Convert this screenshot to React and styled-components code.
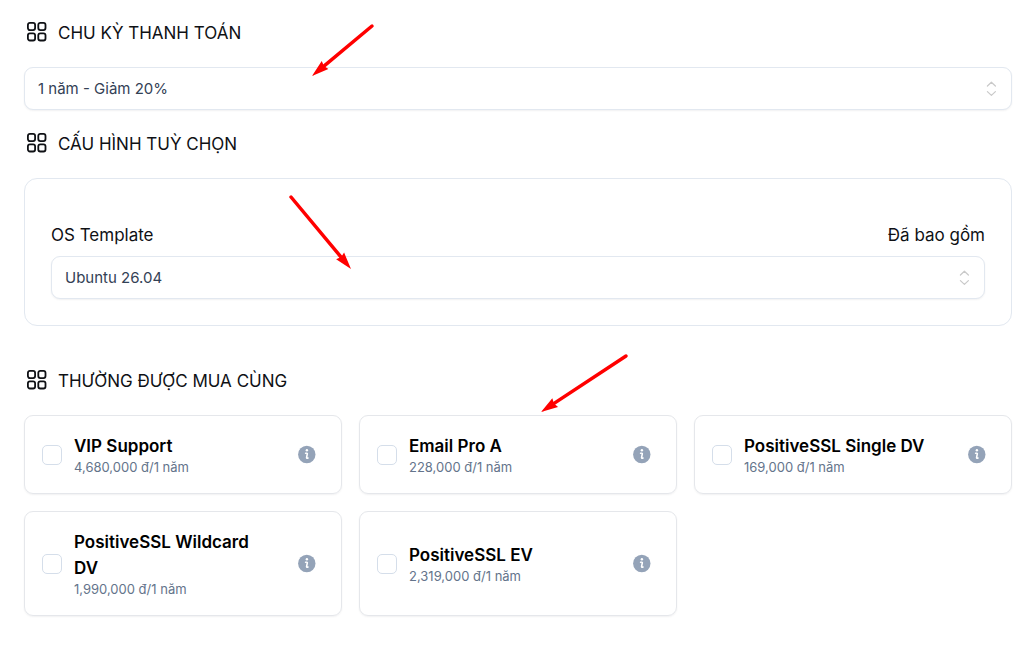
import React from 'react'
import styled, { createGlobalStyle } from 'styled-components'

const GlobalStyle = createGlobalStyle`
  *,
  *::before,
  *::after {
    box-sizing: border-box;
  }

  body {
    margin: 0;
    background: #fff;
    color: #0f1115;
    font-family: Inter, 'Noto Sans', sans-serif;
  }
`

const Page = styled.main`
  position: relative;
  padding: 19px 12px 45px 24px;
`

const Section = styled.section`
  margin-top: ${({ $gap }) => $gap}px;
`

const Heading = styled.h2`
  display: flex;
  align-items: center;
  gap: 10px;
  margin: 0 0 20px;
  padding-left: 2px;
  font-size: 17px;
  font-weight: 400;
  line-height: 28px;
  text-transform: uppercase;

  svg {
    flex: none;
  }
`

const SelectWrapper = styled.div`
  display: grid;
  align-items: center;

  > * {
    grid-area: 1 / 1;
  }

  svg {
    justify-self: end;
    margin-right: 12px;
    pointer-events: none;
  }
`

const Select = styled.select`
  width: 100%;
  height: 43px;
  padding: 0 40px 0 13px;
  border: 1px solid #e2e8f0;
  border-radius: 9px;
  background: #fff;
  box-shadow: 0 1px 2px rgba(15, 23, 42, 0.06);
  color: #334155;
  font-family: inherit;
  font-size: 15px;
  appearance: none;
`

const Panel = styled.div`
  padding: 42px 26px 26px;
  border: 1px solid #e2e8f0;
  border-radius: 13px;
`

const OptionHeader = styled.div`
  display: flex;
  justify-content: space-between;
  margin-bottom: 7px;
  font-size: 17px;
  line-height: 28px;
`

const AddonGrid = styled.div`
  display: grid;
  grid-template-columns: repeat(3, minmax(0, 1fr));
  gap: 17px;
`

const AddonCard = styled.div`
  display: flex;
  align-items: center;
  gap: 12px;
  padding: 17px;
  border: 1px solid #e5e7eb;
  border-radius: 9px;
  box-shadow: 0 1px 2px rgba(15, 23, 42, 0.06);
`

const Checkbox = styled.input`
  flex: none;
  width: 20px;
  height: 20px;
  margin: 0;
  border: 1px solid #d5deea;
  border-radius: 5px;
  background: #fff;
  appearance: none;

  &:checked {
    border-color: #3b82f6;
    background: #3b82f6;
  }
`

const AddonLabel = styled.label`
  flex: 1;
  min-width: 0;
`

const AddonName = styled.span`
  display: block;
  padding-right: 10px;
  color: #000;
  font-size: 17px;
  font-weight: 600;
  line-height: 26px;
`

const AddonPrice = styled.span`
  display: block;
  color: #64748b;
  font-size: 13px;
  line-height: 17px;
`

const InfoButton = styled.button`
  display: flex;
  flex: none;
  padding: 8px;
  border: 0;
  background: none;
  cursor: pointer;
`

const Pointers = styled.svg`
  position: absolute;
  top: 0;
  left: 0;
  pointer-events: none;
`

const GridIcon = () => (
  <svg width='22' height='22' viewBox='0 1 22 22' fill='none' stroke='currentColor' strokeWidth='1.8' aria-hidden='true'>
    <rect x='1.9' y='1.9' width='7.2' height='7.2' rx='2' />
    <rect x='12.3' y='1.9' width='7.2' height='7.2' rx='2' />
    <rect x='1.9' y='12.3' width='7.2' height='7.2' rx='2' />
    <rect x='12.3' y='12.3' width='7.2' height='7.2' rx='2' />
  </svg>
)

const SortIcon = () => (
  <svg width='16' height='18' viewBox='0 0 16 18' fill='none' stroke='#c9c9c9' strokeWidth='1.2' aria-hidden='true'>
    <path d='M3.4 6 7.4 2.2l4 3.8M3.4 11.6l4 3.8 4-3.8' strokeLinecap='round' strokeLinejoin='round' />
  </svg>
)

const InfoIcon = () => (
  <svg width='19' height='19' viewBox='0 0 19 19' aria-hidden='true'>
    <circle cx='9.8' cy='9.5' r='8.7' fill='#94a3b8' />
    <circle cx='9.9' cy='5.2' r='1.2' fill='#fff' />
    <path d='M8.6 8.3h1.3q.5 0 .4.6l-.7 3.4q-.1.8.6.8h.8' fill='none' stroke='#fff' strokeWidth='1.6' strokeLinecap='round' strokeLinejoin='round' />
  </svg>
)

const addons = [
  { id: 'vip', name: 'VIP Support', price: '4,680,000 đ/1 năm' },
  { id: 'email-pro', name: 'Email Pro A', price: '228,000 đ/1 năm' },
  { id: 'ssl-single', name: 'PositiveSSL Single DV', price: '169,000 đ/1 năm' },
  { id: 'ssl-wildcard', name: 'PositiveSSL Wildcard DV', price: '1,990,000 đ/1 năm' },
  { id: 'ssl-ev', name: 'PositiveSSL EV', price: '2,319,000 đ/1 năm' }
]

// line start and tip of each red arrow
const arrows = [
  { from: [372, 26], to: [312, 76] },
  { from: [291, 197], to: [351, 269] },
  { from: [626, 356], to: [541, 412] }
]

const Arrow = ({ from, to }) => {
  const angle = (Math.atan2(to[1] - from[1], to[0] - from[0]) * 180) / Math.PI
  const length = Math.hypot(to[0] - from[0], to[1] - from[1])
  return (
    <g transform={`translate(${from[0]} ${from[1]}) rotate(${angle})`} fill='#f00' stroke='#f00'>
      <path d={`M0 0H${length - 12}`} strokeWidth='3.5' strokeLinecap='round' />
      <path d={`M${length} 0l-17 -5.2 1.5 5.2-1.5 5.2z`} stroke='none' />
    </g>
  )
}

const SelectField = ({ children, ...props }) => (
  <SelectWrapper>
    <Select {...props}>{children}</Select>
    <SortIcon />
  </SelectWrapper>
)

const SectionHeading = ({ id, children }) => (
  <Heading id={id}>
    <GridIcon />
    {children}
  </Heading>
)

export default function App() {
  return (
    <>
      <GlobalStyle />
      <Page>
        <Section $gap={0}>
          <SectionHeading id='billing-cycle'>Chu kỳ thanh toán</SectionHeading>
          <SelectField aria-labelledby='billing-cycle'>
            <option>1 năm - Giảm 20%</option>
          </SelectField>
        </Section>

        <Section $gap={20}>
          <SectionHeading>Cấu hình tuỳ chọn</SectionHeading>
          <Panel>
            <OptionHeader>
              <label htmlFor='os-template'>OS Template</label>
              <span>Đã bao gồm</span>
            </OptionHeader>
            <SelectField id='os-template'>
              <option>Ubuntu 26.04</option>
            </SelectField>
          </Panel>
        </Section>

        <Section $gap={41}>
          <SectionHeading>Thường được mua cùng</SectionHeading>
          <AddonGrid>
            {addons.map(addon => (
              <AddonCard key={addon.id}>
                <Checkbox type='checkbox' id={addon.id} />
                <AddonLabel htmlFor={addon.id}>
                  <AddonName>{addon.name}</AddonName>
                  <AddonPrice>{addon.price}</AddonPrice>
                </AddonLabel>
                <InfoButton type='button' aria-label={`Thông tin ${addon.name}`}>
                  <InfoIcon />
                </InfoButton>
              </AddonCard>
            ))}
          </AddonGrid>
        </Section>

        <Pointers width='640' height='420' aria-hidden='true'>
          {arrows.map((arrow, idx) => (
            <Arrow key={idx} {...arrow} />
          ))}
        </Pointers>
      </Page>
    </>
  )
}
